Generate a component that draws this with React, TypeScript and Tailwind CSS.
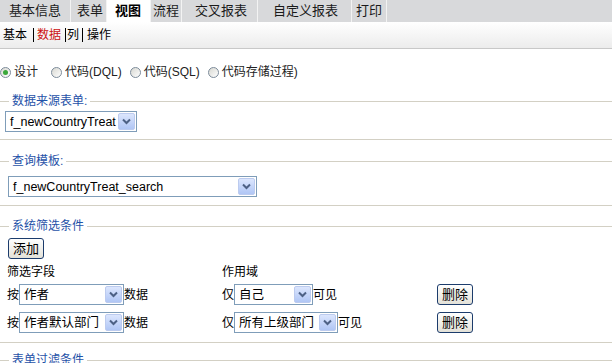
import React from 'react';

interface Tab {
  label: string;
  cls: string;
  active?: boolean;
}

const tabs: Tab[] = [
  { label: '基本信息', cls: 'w-[71px] pl-[9px]' },
  { label: '表单', cls: 'w-[36px] pl-[6px]' },
  { label: '视图', cls: 'w-[44px] pl-[8px]', active: true },
  { label: '流程', cls: 'w-[31px] pl-[2px]' },
  { label: '交叉报表', cls: 'w-[76px] pl-[13px]' },
  { label: '自定义报表', cls: 'w-[94px] pl-[15px]' },
  { label: '打印', cls: 'w-[35px] pl-[4px]' },
];

const Select: React.FC<{ value: string; className: string }> = ({ value, className }) => (
  <div className={`flex h-[21px] items-center border border-[#7f9db9] bg-white ${className}`}>
    <span className="flex-1 overflow-hidden whitespace-nowrap pl-[4px] text-[12.5px] leading-[16px] text-black">
      {value}
    </span>
    <span className="mr-[1px] flex h-[17px] w-[17px] shrink-0 items-center justify-center rounded-[2px] border border-[#bccbef] bg-linear-to-b from-[#dce6fd] to-[#b0c6f5]">
      <svg width="9" height="7" viewBox="0 0 9 7">
        <path d="M1 1.5 L4.5 5 L8 1.5" stroke="#4d6185" strokeWidth="2" fill="none" />
      </svg>
    </span>
  </div>
);

const Radio: React.FC<{ checked?: boolean }> = ({ checked }) => (
  <span className="flex h-[11px] w-[11px] items-center justify-center rounded-full border border-[#7c8b9a] bg-linear-to-br from-[#d8d8d2] to-white">
    {checked && <span className="h-[5px] w-[5px] rounded-full bg-[#3aa83a]" />}
  </span>
);

const Btn: React.FC<{ children: React.ReactNode }> = ({ children }) => (
  <button className="flex h-[21px] w-[36px] items-center justify-center rounded-[3px] border border-[#1c3c6c] bg-linear-to-b from-white to-[#e3e1d8] text-[13px] leading-none text-black">
    {children}
  </button>
);

const Section: React.FC<{ title: string; className: string; children?: React.ReactNode }> = ({
  title,
  className,
  children,
}) => (
  <fieldset className={`border-y border-[#d3d0c4] ${className}`}>
    <legend className="ml-[9px] px-[3px] text-[12px] leading-[14px] text-[#1f52a8]">{title}</legend>
    {children}
  </fieldset>
);

const Sep = () => <span className="h-[14px] w-px bg-black" />;

export default function App() {
  return (
    <div className="h-[363px] w-full overflow-hidden bg-white font-['Liberation_Sans','Noto_Sans_CJK_SC',sans-serif] text-black">
      {/* top tabs */}
      <div className="flex h-[22px] bg-[#d8d9db]">
        {tabs.map((t) => (
          <div
            key={t.label}
            className={`${t.cls} h-[22px] border-r border-[#f3f3f3] text-[13px] leading-[22px] ${
              t.active ? 'bg-white font-bold' : 'text-[#1a1a1a]'
            }`}
          >
            {t.label}
          </div>
        ))}
      </div>

      {/* sub tabs */}
      <div className="flex h-[27px] items-center border-b border-[#c8c8c8] bg-linear-to-b from-white to-[#ececec] text-[12px] leading-[14px]">
        <span className="ml-[3px]">基本</span>
        <span className="ml-[6px] flex"><Sep /></span>
        <span className="ml-[3px] text-[#cc1111]">数据</span>
        <span className="ml-[4px] flex"><Sep /></span>
        <span className="ml-[1px]">列</span>
        <span className="ml-[3px] flex"><Sep /></span>
        <span className="ml-[4px]">操作</span>
      </div>

      {/* mode radios */}
      <div className="mt-[15px] flex h-[16px] items-center text-[12px] leading-[14px] text-[#222]">
        <Radio checked />
        <span className="ml-[3px] mr-[13px]">设计</span>
        <Radio />
        <span className="ml-[3px] mr-[8px]">代码(DQL)</span>
        <Radio />
        <span className="ml-[3px] mr-[8px]">代码(SQL)</span>
        <Radio />
        <span className="ml-[3px]">代码存储过程)</span>
      </div>

      <Section title="数据来源表单:" className="mt-[14px] pb-[7px]">
        <Select value="f_newCountryTreat" className="ml-[5px] mt-[3px] w-[132px]" />
      </Section>

      <Section title="查询模板:" className="mt-[14px] pb-[8px]">
        <Select value="f_newCountryTreat_search" className="ml-[8px] mt-[8px] w-[249px]" />
      </Section>

      <Section title="系统筛选条件" className="mt-[13px] pb-[9px]">
        <div className="pl-[8px] pt-[5px]">
          <Btn>添加</Btn>
        </div>
        <div className="mt-[6px] grid grid-cols-[215px_215px_auto] pl-[7px] text-[12px] leading-[14px]">
          <span>筛选字段</span>
          <span>作用域</span>
          <span />
        </div>
        <div className="mt-[5px] grid grid-cols-[215px_215px_auto] items-center pl-[7px] text-[12px] leading-[14px]">
          <div className="flex items-center">
            <span>按</span>
            <Select value="作者" className="w-[105px]" />
            <span>数据</span>
          </div>
          <div className="flex items-center">
            <span>仅</span>
            <Select value="自己" className="w-[79px]" />
            <span>可见</span>
          </div>
          <Btn>删除</Btn>
        </div>
        <div className="mt-[7px] grid grid-cols-[215px_215px_auto] items-center pl-[7px] text-[12px] leading-[14px]">
          <div className="flex items-center">
            <span>按</span>
            <Select value="作者默认部门" className="w-[105px]" />
            <span>数据</span>
          </div>
          <div className="flex items-center">
            <span>仅</span>
            <Select value="所有上级部门" className="w-[104px]" />
            <span>可见</span>
          </div>
          <Btn>删除</Btn>
        </div>
      </Section>

      <Section title="表单过滤条件" className="mt-[10px]" />
    </div>
  );
}
